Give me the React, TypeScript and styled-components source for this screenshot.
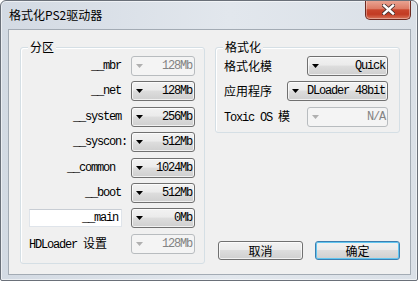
import React from "react";
import styled, { createGlobalStyle, css } from "styled-components";

const GlobalStyle = createGlobalStyle`
  html, body { margin: 0; padding: 0; background: #ffffff; }
  body { font-family: "Noto Sans CJK SC", sans-serif; }
  * { box-sizing: border-box; }
`;

const MONO = `"Liberation Mono", "Noto Sans CJK SC", monospace`;

const Window = styled.div`
  width: 418px;
  height: 281px;
  border: 1px solid #6a7079;
  border-radius: 6px 6px 2px 2px;
  background: linear-gradient(90deg, #d3dae3 0%, #e2e7ed 55%, #dae0e7 100%);
  box-shadow: inset 0 0 0 1px rgba(255, 255, 255, 0.55);
  display: flex;
  flex-direction: column;
  padding: 0 6px 5px 7px;
  overflow: hidden;
`;

const TitleBar = styled.div`
  height: 28px;
  display: flex;
  align-items: flex-start;
`;

const Title = styled.div`
  margin: 6px 0 0 1px;
  font: 12px/16px "Noto Sans CJK SC", sans-serif;
  color: #000;
`;

const CloseButton = styled.div`
  width: 46px;
  height: 20px;
  margin: -1px 0 0 auto;
  border: 1px solid #6d2a21;
  border-top: none;
  border-radius: 0 0 5px 5px;
  background: linear-gradient(#eaa897 0%, #dd7c66 45%, #c9462d 52%, #c23b23 75%, #d87459 100%);
  box-shadow: inset 0 0 0 1px rgba(255, 255, 255, 0.35);
  display: flex;
  align-items: center;
  justify-content: center;
`;

const Client = styled.div`
  flex: 1;
  border: 1px solid #a3abb4;
  background: #f0f0f0;
  display: grid;
  grid-template-columns: 185px 185px;
  column-gap: 10px;
  padding: 17px 0 10px 11px;
`;

const Group = styled.div`
  position: relative;
  border: 1px solid #d5dfe5;
  border-radius: 3px;
  box-shadow: inset 1px 1px 0 #fff;
`;

const Legend = styled.span`
  position: absolute;
  left: 7px;
  top: -9px;
  padding: 0 2px;
  background: #f0f0f0;
  font: 12px/16px "Noto Sans CJK SC", sans-serif;
  color: #000;
`;

const LeftGroup = styled(Group)`
  height: 100%;
  padding: 8px 9px 0 8px;
  display: grid;
  grid-template-columns: 98px 64px;
  grid-auto-rows: 20px;
  column-gap: 4px;
  row-gap: 5.4px;
  align-items: center;
`;

const RightColumn = styled.div`
  display: flex;
  flex-direction: column;
  padding-bottom: 4px;
`;

const RightGroup = styled(Group)`
  padding: 8px 11px 5px 8px;
  display: flex;
  flex-direction: column;
  gap: 5.4px;
`;

const FormRow = styled.div`
  height: 20px;
  display: flex;
  align-items: center;
  justify-content: space-between;
`;

const Label = styled.span`
  font: 12px/14px ${MONO};
  letter-spacing: -1.2px;
  white-space: pre;
  color: #000;
`;

const RightLabel = styled(Label)`
  text-align: right;
`;

const Cjk = styled.span`
  font: 12px/14px "Noto Sans CJK SC", sans-serif;
  letter-spacing: 0;
`;

const TextBox = styled.div`
  width: 93px;
  height: 18px;
  background: #fff;
  border: 1px solid #dfe4ea;
  border-top-color: #c8cdd4;
  padding-right: 3px;
  text-align: right;
  font: 12px/16px ${MONO};
  letter-spacing: -1.2px;
  white-space: pre;
  color: #000;
`;

const ComboBox = styled.div<{ $disabled?: boolean; $w: number }>`
  width: ${(p) => p.$w}px;
  height: 20px;
  display: flex;
  align-items: center;
  justify-content: space-between;
  padding: 0 2px 0 4px;
  border: 1px solid #707070;
  border-radius: 3px;
  background: linear-gradient(#f2f2f2 0%, #ebebeb 45%, #dddddd 50%, #cfcfcf 100%);
  box-shadow: inset 0 0 0 1px rgba(255, 255, 255, 0.7);
  font: 12px/14px ${MONO};
  letter-spacing: -1.2px;
  white-space: pre;
  color: #000;
  ${(p) =>
    p.$disabled &&
    css`
      border-color: #b8bcbf;
      background: #f4f4f4;
      box-shadow: none;
      color: #838383;
    `}
`;

const Buttons = styled.div`
  margin-top: auto;
  display: flex;
  justify-content: flex-end;
  gap: 12px;
`;

const Button = styled.div<{ $default?: boolean }>`
  width: 85px;
  height: 19px;
  border: 1px solid #707070;
  border-radius: 3px;
  background: linear-gradient(#f2f2f2 0%, #ebebeb 45%, #dddddd 50%, #cfcfcf 100%);
  box-shadow: inset 0 0 0 1px rgba(255, 255, 255, 0.7);
  display: flex;
  align-items: center;
  justify-content: center;
  font: 12px/14px "Noto Sans CJK SC", sans-serif;
  color: #000;
  ${(p) =>
    p.$default &&
    css`
      border-color: #3c7fb1;
      box-shadow: inset 0 0 0 1px #62c6f0;
    `}
`;

const Arrow = ({ disabled }: { disabled?: boolean }) => (
  <svg width="7" height="4" viewBox="0 0 7 4">
    <polygon points="0,0 7,0 3.5,4" fill={disabled ? "#b0b0b0" : "#000"} />
  </svg>
);

const Combo = ({ value, w, disabled }: { value: string; w: number; disabled?: boolean }) => (
  <ComboBox $w={w} $disabled={disabled}>
    <Arrow disabled={disabled} />
    <span>{value}</span>
  </ComboBox>
);

const partitions = [
  { label: "__mbr ", value: "128Mb", disabled: true },
  { label: "__net ", value: "128Mb" },
  { label: "__system ", value: "256Mb" },
  { label: "__syscon:", value: "512Mb" },
  { label: "__common  ", value: "1024Mb" },
  { label: "__boot ", value: "512Mb" },
];

export default function App() {
  return (
    <>
      <GlobalStyle />
      <Window>
        <TitleBar>
          <Title>格式化PS2驱动器</Title>
          <CloseButton>
            <svg width="13" height="11" viewBox="0 0 13 11">
              <path d="M2 1.5 L11 9.5 M11 1.5 L2 9.5" stroke="#4a3230" strokeWidth="4.2" strokeLinecap="square" />
              <path d="M2 1.5 L11 9.5 M11 1.5 L2 9.5" stroke="#ffffff" strokeWidth="2.4" strokeLinecap="square" />
            </svg>
          </CloseButton>
        </TitleBar>
        <Client>
          <LeftGroup>
            <Legend>分区</Legend>
            {partitions.map((p) => (
              <React.Fragment key={p.label}>
                <RightLabel>{p.label}</RightLabel>
                <Combo value={p.value} w={64} disabled={p.disabled} />
              </React.Fragment>
            ))}
            <TextBox>__main</TextBox>
            <Combo value="0Mb" w={64} />
            <Label>
              HDLoader <Cjk>设置</Cjk>
            </Label>
            <Combo value="128Mb" w={64} disabled />
          </LeftGroup>
          <RightColumn>
            <RightGroup>
              <Legend>格式化</Legend>
              <FormRow>
                <Cjk>格式化模</Cjk>
                <Combo value="Quick" w={81} />
              </FormRow>
              <FormRow>
                <Cjk>应用程序</Cjk>
                <Combo value="DLoader 48bit" w={101} />
              </FormRow>
              <FormRow>
                <Label>
                  Toxic OS <Cjk>模</Cjk>
                </Label>
                <Combo value="N/A" w={81} disabled />
              </FormRow>
            </RightGroup>
            <Buttons>
              <Button>取消</Button>
              <Button $default>确定</Button>
            </Buttons>
          </RightColumn>
        </Client>
      </Window>
    </>
  );
}
